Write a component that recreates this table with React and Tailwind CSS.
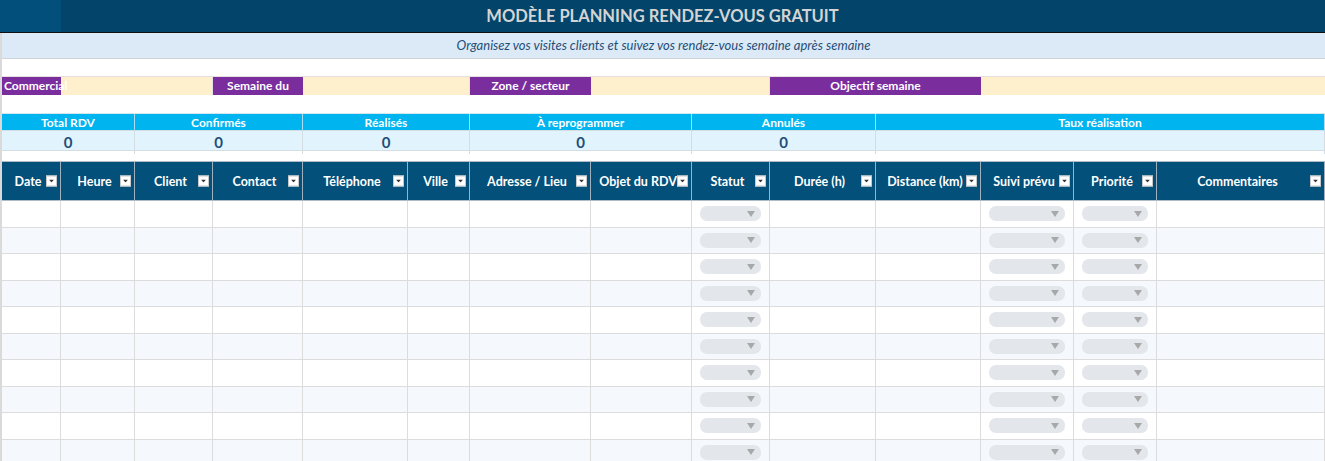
const COLS =
  "grid grid-cols-[59px_74px_78px_90px_105px_62px_121px_101px_78px_106px_105px_93px_83px_168px]";

const headers = [
  "Date",
  "Heure",
  "Client",
  "Contact",
  "Téléphone",
  "Ville",
  "Adresse / Lieu",
  "Objet du RDV",
  "Statut",
  "Durée (h)",
  "Distance (km)",
  "Suivi prévu",
  "Priorité",
  "Commentaires",
];

// columns holding a dropdown pill
const pillCols = [8, 11, 12];

const stats = [
  { label: "Total RDV", span: "col-span-2", value: "0" },
  { label: "Confirmés", span: "col-span-2", value: "0" },
  { label: "Réalisés", span: "col-span-2", value: "0" },
  { label: "À reprogrammer", span: "col-span-2", value: "0" },
  { label: "Annulés", span: "col-span-2", value: "0" },
  { label: "Taux réalisation", span: "col-span-4", value: "" },
];

const FilterButton = () => (
  <span className="absolute right-[3px] top-1/2 -translate-y-1/2 w-[11px] h-[11px] bg-white border border-[#c8c8c8] flex items-center justify-center">
    <svg width="5" height="3" viewBox="0 0 5 3">
      <path d="M0 0h5L2.5 3z" fill="#333" />
    </svg>
  </span>
);

const Pill = () => (
  <div className="mx-2 h-[15px] rounded-[7px] bg-[#e3e6ea] flex items-center justify-end pr-[6px]">
    <svg width="8" height="6" viewBox="0 0 8 6">
      <path d="M0 0h8L4 6z" fill="#a8a8a8" />
    </svg>
  </div>
);

export default function App() {
  const rows = Array.from({ length: 10 });

  return (
    <div className="w-[1325px] h-[461px] overflow-hidden bg-white font-['Lato',sans-serif]">
      {/* Title bar */}
      <div className="h-[33px] border-b border-[#111] bg-[linear-gradient(to_right,#024f7c_61px,#02446a_61px)] flex items-center justify-center">
        <h1 className="text-[16.5px] font-bold text-[#d4d4d4]">
          MODÈLE PLANNING RENDEZ-VOUS GRATUIT
        </h1>
      </div>

      <div className="border-l-2 border-[#dadada]">
        {/* Subtitle */}
        <div className="h-[26px] bg-[#dbeaf6] border-b border-[#d0d4d8] flex items-center justify-center">
          <p className="text-[13px] italic text-[#1f4e79]">
            Organisez vos visites clients et suivez vos rendez-vous semaine après semaine
          </p>
        </div>

        <div className="h-[17px]" />

        {/* Info row */}
        <div className={`${COLS} h-[19px] border-y border-[#e6e0e0] text-[12px] font-bold text-white`}>
          <div className="bg-[#7a2e9e] pl-[2px] flex items-center whitespace-nowrap relative z-10">
            Commercial
          </div>
          <div className="col-span-2 bg-[#fef0cd] border-r border-[#e6e0e0]" />
          <div className="bg-[#7a2e9e] flex items-center justify-center">Semaine du</div>
          <div className="col-span-2 bg-[#fef0cd] border-r border-[#e6e0e0]" />
          <div className="bg-[#7a2e9e] flex items-center justify-center">Zone / secteur</div>
          <div className="col-span-2 bg-[#fef0cd] border-r border-[#e6e0e0]" />
          <div className="col-span-2 bg-[#7a2e9e] flex items-center justify-center">
            Objectif semaine
          </div>
          <div className="col-span-3 bg-[#fef0cd]" />
        </div>

        <div className="h-[18px]" />

        {/* Stats */}
        <div className={`${COLS} h-[17px] bg-[#00b4ef] border-t border-[#d6e6ef]`}>
          {stats.map((s) => (
            <div
              key={s.label}
              className={`${s.span} border-r border-[#a9def5] flex items-center justify-center text-[12px] font-bold text-white`}
            >
              {s.label}
            </div>
          ))}
        </div>
        <div className={`${COLS} h-[21px] bg-[#e1f4fd] border-y border-[#d4dde2]`}>
          {stats.map((s) => (
            <div
              key={s.label}
              className={`${s.span} border-r border-[#d4dde2] flex items-center justify-center text-[15px] font-bold text-[#1f4e79]`}
            >
              {s.value}
            </div>
          ))}
        </div>

        <div className="h-[10px]" />

        {/* Table header */}
        <div className={`${COLS} h-[40px] bg-[#03507a] border-y border-[#b0bcc5]`}>
          {headers.map((h) => (
            <div
              key={h}
              className="relative border-r border-[#9fb1bf] flex items-center justify-center pt-[2px] text-[12.5px] font-bold text-white whitespace-nowrap"
            >
              <span className="pr-[6px]">{h}</span>
              <FilterButton />
            </div>
          ))}
        </div>

        {/* Rows */}
        {rows.map((_, r) => (
          <div
            key={r}
            className={`${COLS} h-[26.5px] border-b border-[#dcdcdc] ${
              r % 2 === 1 ? "bg-[#f5f9fd]" : "bg-white"
            }`}
          >
            {headers.map((h, c) => (
              <div key={h} className="border-r border-[#dcdcdc] flex items-center">
                {pillCols.includes(c) && (
                  <div className="w-full">
                    <Pill />
                  </div>
                )}
              </div>
            ))}
          </div>
        ))}
      </div>
    </div>
  );
}
